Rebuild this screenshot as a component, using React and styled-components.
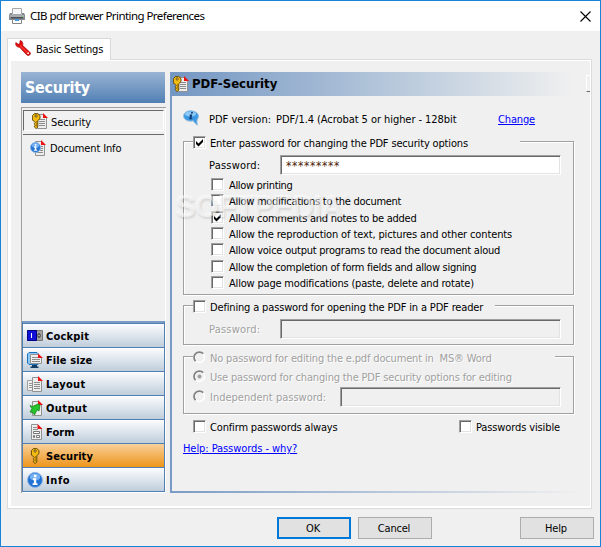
import React from "react";
import styled, { createGlobalStyle, css } from "styled-components";

const GlobalStyle = createGlobalStyle`
  * {
    box-sizing: border-box;
  }

  body {
    margin: 0;
    background: #f0f0f0;
    color: #000;
    font: 11px/15px "DejaVu Sans Condensed", "DejaVu Sans", sans-serif;
  }

  svg {
    display: block;
    flex: none;
  }
`;

const sunken = css`
  border: 1px solid #fff;
  border-top-color: #a0a0a0;
  border-left-color: #a0a0a0;
  box-shadow: inset 1px 1px 0 #696969, inset -1px -1px 0 #e3e3e3;
`;

const Window = styled.div`
  display: flex;
  flex-direction: column;
  width: 601px;
  height: 547px;
  border: 1px solid #1883d7;
  background: #f0f0f0;
  overflow: hidden;
`;

const TitleBar = styled.header`
  display: flex;
  flex: none;
  align-items: center;
  height: 30px;
  padding: 0 9px 0 8px;
  background: #fff;
`;

const Title = styled.h1`
  flex: 1;
  margin: 0 0 0 5px;
  font: 11.5px/16px "Noto Sans", sans-serif;
  letter-spacing: -0.56px;
`;

const Text = styled.span`
  white-space: pre;
  letter-spacing: ${props => props.$track || 0}px;
  ${props =>
    props.$disabled &&
    css`
      color: #a0a0a0;
      text-shadow: 1px 1px 0 #fff;
    `}
`;

const Link = styled.a`
  color: #0000ff;
  text-decoration: underline;
  letter-spacing: ${props => props.$track || 0}px;
  white-space: pre;
`;

const Tab = styled.div`
  display: flex;
  flex: none;
  position: relative;
  z-index: 1;
  width: 104px;
  height: 22px;
  margin: 7px 0 -1px 6px;
  padding: 1px 0 0 7px;
  border: 1px solid #d9d9d9;
  border-bottom: none;
  background: #fff;

  ${Text} {
    margin: 2px 0 0 5px;
  }
`;

const TabPage = styled.main`
  flex: none;
  width: 585px;
  height: 450px;
  margin-left: 6px;
  padding: 1px 1px 2px 3px;
  border: 1px solid #dcdcdc;
  background: #fff;
`;

const Columns = styled.div`
  display: flex;
  height: 100%;
  padding: 11px 0 0 10px;
  background: #f0f0f0;
`;

const Sidebar = styled.aside`
  width: 145px;
  height: 421px;
  display: flex;
  flex-direction: column;
`;

const SidebarTitle = styled.h2`
  width: 144px;
  height: 31px;
  margin: 0 0 4px;
  padding-left: 4px;
  background: linear-gradient(#9ab4d4, #5180b4);
  color: #fff;
  font: bold 16px/32px "DejaVu Sans Condensed", sans-serif;
  letter-spacing: -0.3px;
`;

const SidebarBody = styled.div`
  display: flex;
  flex: 1;
  flex-direction: column;
  border: solid #a0a0a0;
  border-width: 1px 0 0 1px;
  box-shadow: inset -1px -1px 0 #fff;
`;

const SubItem = styled.div`
  display: flex;
  align-items: center;
  height: 21px;
  margin: 2px 2px 0 1px;
  padding-left: 7px;

  ${Text} {
    margin: 2px 0 0 4px;
  }

  ${props =>
    props.$active &&
    css`
      padding-left: 8px;
      border: 1px solid #fff;
      border-top-color: #696969;
      border-left-color: #696969;
      background: #f1f1f1;

      ${Text} {
        margin: 3px 0 0 3px;
      }
    `}
`;

const Divider = styled.div`
  height: 1px;
  margin: 3px 2px 0 1px;
  background: #696969;
`;

const Nav = styled.nav`
  width: 143px;
  margin: auto 0 1px;
  border: 1px solid #5180b4;
  border-top: 2px solid #7a9cc6;
`;

const NavItem = styled.div`
  display: flex;
  align-items: center;
  height: 24px;
  padding-left: 4px;
  border-top: 1px solid #5180b4;
  background: ${props =>
    props.$active
      ? "linear-gradient(#f8d09a, #ee951a)"
      : "linear-gradient(#fcfdfe, #bfcddb)"};
  font-weight: bold;

  ${Text} {
    margin: 1px 0 0 3px;
  }
`;

const Main = styled.section`
  display: flex;
  flex-direction: column;
  width: 412px;
  height: 421px;
  margin-left: 4px;
  background:
    linear-gradient(#7a9bc5, #7a9bc5) left / 2px 100% no-repeat,
    linear-gradient(90deg, #7a9bc5, #f0f0f0) bottom left / 410px 2px no-repeat;
`;

const MainHeader = styled.header`
  display: flex;
  flex: none;
  align-items: center;
  height: 24px;
  padding-left: 3px;
  background: linear-gradient(90deg, #7396c2, #b4c6da 52%, #f0f0f0 98%);
`;

const MainTitle = styled.h2`
  margin: 0 0 0 3px;
  font: bold 13px/20px "DejaVu Sans Condensed", sans-serif;
`;

const ButtonStub = styled.div`
  width: 4px;
  height: 17px;
  margin: 3px 0 0 auto;
  border: solid #fff;
  border-width: 1px 0 1px 1px;
  border-bottom-color: #696969;
`;

const MainBody = styled.div`
  padding: 14px 0 0 13px;
`;

const VersionRow = styled.div`
  display: flex;
  height: 31px;

  ${Text}, ${Link} {
    margin-top: 2px;
  }

  ${Text} {
    margin-left: 10px;
  }

  ${Text} + ${Text} {
    width: 222px;
    margin-left: 5px;
  }
`;

const Group = styled.div`
  width: 391px;
  height: ${props => props.$height}px;
  margin-bottom: ${props => props.$gap}px;
  padding-left: 9px;
  border: 1px solid #a0a0a0;
  box-shadow: 1px 1px 0 #fff, inset 1px 1px 0 #fff;
`;

const Option = styled.div`
  display: flex;
  align-items: flex-start;
  height: ${props => props.$height || 15}px;

  ${Text} {
    margin-left: 4px;
  }
`;

const Legend = styled(Option)`
  width: ${props => props.$width}px;
  margin-top: -6px;
  background: #f0f0f0;
`;

const Input = styled.div`
  ${sunken}
  width: ${props => props.$width}px;
  height: 20px;
  padding: 4px 0 0 5px;
  background: ${props => (props.$disabled ? "#f0f0f0" : "#fff")};
  color: #4a2408;
  font-size: 12px;
  line-height: 13px;
  letter-spacing: 0.6px;
`;

const Field = styled.label`
  display: flex;
  margin: 4px 0 0 16px;

  ${Text} {
    width: 71px;
    margin-top: 3px;
  }
`;

const IndependentOption = styled(Option)`
  ${Text} {
    width: 130px;
  }

  ${Input} {
    margin-top: -3px;
  }
`;

const Permissions = styled.div`
  margin: 3px 0 0 18px;
`;

const Permission = styled(Option)`
  height: 16.33px;

  ${Text} {
    margin-left: 5px;
  }
`;

const Box = styled.span`
  ${sunken}
  flex: none;
  width: 13px;
  height: 13px;
  padding: 1px;
  background: #fff;
`;

const Footnotes = styled.div`
  display: flex;
  justify-content: space-between;
  width: 367px;
  margin: 0 0 6px 10px;
`;

const Buttons = styled.footer`
  display: flex;
  padding: 8px 6px 0 276px;
`;

const Button = styled.button`
  width: 74px;
  height: 22px;
  margin-left: ${props => props.$gap || 0};
  padding: 0 2px 0 0;
  border: ${props => (props.$primary ? "2px solid #0078d7" : "1px solid #adadad")};
  background: #e1e1e1;
  color: #000;
  font: 11px/15px "DejaVu Sans Condensed", sans-serif;
  letter-spacing: -0.2px;
`;

const Watermark = styled.div`
  position: absolute;
  left: 175px;
  top: 189px;
  color: rgba(255, 255, 255, 0.55);
  font: bold 31px/36px "Liberation Sans", sans-serif;
  letter-spacing: -1.2px;
  text-shadow: 1px 2px 2px rgba(0, 0, 0, 0.1);
  pointer-events: none;

  sup {
    margin-left: 1px;
    font-size: 8px;
    line-height: 0;
    vertical-align: 17px;
  }
`;

function Icon({ size = 16, children }) {
  return (
    <svg width={size} height={size} viewBox="0 0 16 16">
      {children}
    </svg>
  );
}

const Sheet = () => (
  <>
    <path d="M5.5 1.5h6l3 3v11h-9z" fill="#ededed" stroke="#929292" />
    <path d="M7 6.5h6M7 8.5h6M7 10.5h6M7 12.5h6" stroke="#8d8d8d" />
    <path d="M11 0v5h5z" fill="#ee1111" />
  </>
);

const Key = ({ x = 0 }) => (
  <g transform={`translate(${x} 0)`} stroke="#584000" strokeWidth=".9">
    <path
      d="M4.4.6h3.4l2.2 2v3l-2.2 2v6.4l-1.6 1.6-1.8-1.6v-.9l1-1-1-1v-.8l1-1-1-.8-2-1.4V2.6z"
      fill="#f4bb12"
    />
    <circle cx="6.1" cy="3" r="1.1" fill="#fff2b0" />
    <path d="M6.5 8v5.6" stroke="#a57700" strokeWidth=".8" />
  </g>
);

const InfoDisc = ({ r = 7.5, cx = 8, cy = 8 }) => (
  <>
    <circle cx={cx} cy={cy} r={r} fill="#2371d2" stroke="#8db6e6" />
    <ellipse cx={cx} cy={cy - r * 0.4} rx={r * 0.7} ry={r * 0.48} fill="#75b1f3" />
    <g transform={`translate(${cx} ${cy}) scale(${r / 7.5})`}>
      <circle cx=".2" cy="-4" r="1.4" fill="#fff" />
      <path d="M-2-1.8h3.2v5H2.5V5H-2.4V3.2h1.3V0H-2z" fill="#fff" />
    </g>
  </>
);

const PrinterIcon = () => (
  <Icon>
    <path d="M3.5.5h9v6h-9z" fill="#f7f7f7" stroke="#a7a7a7" />
    <path d="M1 5h2v2h10V5h2l1 2v5H0V7z" fill="#85898d" />
    <path d="M1 7h14v2H1z" fill="#a8acb0" />
    <path d="M2 9h12v1.5H2z" fill="#4d5155" />
    <path d="M3.5 11.5h9v4h-9z" fill="#fafafa" stroke="#868686" />
    <path d="M6 11h4v2H6z" fill="#3f97e0" />
    <path d="M13 8h1v1h-1z" fill="#66dd55" />
  </Icon>
);

const WrenchIcon = () => (
  <Icon>
    <path
      d="M5.2.5 4.8 3.6 3.3 4.3.8 2.6C.2 5.3 1.6 7.4 4.6 7.2l7 7.6c1.2 1.2 3.4.7 3.8-1 .1-.8-.2-1.4-.8-1.9L7.7 5.6C8.2 2.8 7.4 1 5.2.5z"
      fill="#ec0d0d"
      stroke="#9a0606"
      strokeWidth=".7"
    />
    <circle cx="13.1" cy="13.2" r=".9" fill="#fff" />
    <path d="M5 5.5l7 6.8" stroke="#ff6a5c" strokeWidth=".8" />
  </Icon>
);

const KeySheetIcon = () => (
  <Icon>
    <Sheet />
    <Key x={-2} />
  </Icon>
);

const InfoSheetIcon = () => (
  <Icon>
    <Sheet />
    <InfoDisc cx={5.5} cy={7.5} r={5} />
  </Icon>
);

const BubbleIcon = () => (
  <Icon>
    <path
      d="M7.5.8C3.6.8.6 3 .6 6s3 5.2 6.9 5.2c1 0 1.9-.1 2.7-.4 1 1.6 2.3 3.3 4.3 4.3-.5-1.5-.7-3.5-.3-5.4.9-1 1.3-2.3 1.3-3.7 0-3-3.900-5.200-8-5.200z"
      fill="#3c99e4"
      stroke="#9cc0dd"
    />
    <ellipse cx="7.5" cy="4" rx="5.5" ry="2.6" fill="#8dcbf6" />
    <path d="M8.2 2h1.8l-.4 1.600H7.900zM6.800 4.500h2.500L8.400 8.200h1.100l-.3 1H6.100l.9-3.700h-.5z" fill="#123a72" />
  </Icon>
);

const CockpitIcon = () => (
  <Icon>
    <path d="M.5 2.5h15v10H.5z" fill="#a2a2a2" stroke="#777" />
    <path d="M.5 2.5h9v10h-9z" fill="#1010d8" stroke="#000080" />
    <path d="M4.5 5v5" stroke="#fff" />
    <ellipse cx="12" cy="7.5" rx="1.1" ry="2" fill="#eee" stroke="#222" />
  </Icon>
);

const FileSizeIcon = () => (
  <Icon>
    <path d="M2 .5h8l1 1v11H2L.5 11V2z" fill="#8fc6f2" stroke="#1d72bd" />
    <path d="M3.5 2.5h8l3 3v6h-11z" fill="#ededed" stroke="#929292" />
    <path d="M5 5.5h7M5 7.5h8M5 9.5h8" stroke="#8d8d8d" />
    <path d="M11 1.5v4.5h5z" fill="#ee1111" />
    <path d="M5 13h5v1.5h1.5V16h-8v-1.500H5z" fill="#143d66" />
  </Icon>
);

const LayoutIcon = () => (
  <Icon>
    <path d="M.5 4.5h6v10h-6z" fill="#eee" stroke="#a2a2a2" />
    <path d="M2 7.5h3M2 9.5h3M2 11.5h3" stroke="#999" />
    <Sheet />
  </Icon>
);

const OutputIcon = () => (
  <Icon>
    <path d="M5.5 1.5h6l3 3v11h-9z" fill="#ededed" stroke="#929292" />
    <path d="M11 0v5h5z" fill="#ee1111" />
    <path
      d="M3 5.500l2.500 1L11 4l2 1-1 6-2-1.200L7.500 15 6 12.500 3 12l2-3.200z"
      fill="#27c52c"
      stroke="#138818"
      strokeWidth=".8"
    />
  </Icon>
);

const FormIcon = () => (
  <Icon>
    <path d="M4.5.5h6l4 4v11h-10z" fill="#ededed" stroke="#929292" />
    <path d="M6 3.5h4M6 5.5h5" stroke="#8d8d8d" />
    <path d="M6.5 7.5h6v2h-6zM6.5 11.5h1v2h-1zM9.5 11.5h3v2h-3z" fill="#fff" stroke="#777" />
    <path d="M10.5 0v5h5z" fill="#ee1111" />
  </Icon>
);

const KeyIcon = () => (
  <Icon>
    <Key x={2} />
  </Icon>
);

const InfoIcon = () => (
  <Icon>
    <InfoDisc />
  </Icon>
);

const CloseIcon = () => (
  <svg width="11" height="11" viewBox="0 0 11 11">
    <path d="M.5.5l10 10M10.5.5l-10 10" stroke="#000" strokeWidth="1.1" />
  </svg>
);

function Checkbox({ checked }) {
  return (
    <Box>
      {checked && (
        <svg width="9" height="9" viewBox="0 0 9 9">
          <path d="M1 3v3l2.5 2.5L8 4V1L3.5 5.5z" fill="#000" />
        </svg>
      )}
    </Box>
  );
}

function Radio({ checked }) {
  return (
    <svg width="13" height="13" viewBox="0 0 13 13">
      <circle cx="6.5" cy="6.5" r="5" fill="#f0f0f0" stroke="#fff" strokeWidth="1.5" />
      <path d="M2.6 10.2A5.3 5.3 0 0 1 10.2 2.6" fill="none" stroke="#808080" strokeWidth="1.7" />
      {checked && <circle cx="6.5" cy="6.5" r="2" fill="#a0a0a0" />}
    </svg>
  );
}

const sections = [
  { name: "Cockpit", icon: <CockpitIcon />, track: 0.2 },
  { name: "File size", icon: <FileSizeIcon /> },
  { name: "Layout", icon: <LayoutIcon />, track: 0.3 },
  { name: "Output", icon: <OutputIcon />, track: 0.4 },
  { name: "Form", icon: <FormIcon /> },
  { name: "Security", icon: <KeyIcon />, active: true },
  { name: "Info", icon: <InfoIcon />, track: 0.6 }
];

const permissions = [
  { label: "Allow printing", track: -0.33 },
  { label: "Allow modifications to the document", track: -0.27 },
  { label: "Allow comments and notes to be added", track: -0.26, checked: true },
  { label: "Allow the reproduction of text, pictures and other contents", track: -0.13 },
  { label: "Allow voice output programs to read the document aloud", track: -0.23 },
  { label: "Allow the completion of form fields and allow signing", track: -0.28 },
  { label: "Allow page modifications (paste, delete and rotate)", track: -0.19 }
];

function SecuritySidebar() {
  return (
    <Sidebar>
      <SidebarTitle>Security</SidebarTitle>
      <SidebarBody>
        <SubItem $active>
          <KeySheetIcon />
          <Text $track={-0.08}>Security</Text>
        </SubItem>
        <Divider />
        <SubItem>
          <InfoSheetIcon />
          <Text $track={-0.14}>Document Info</Text>
        </SubItem>
        <Nav>
          {sections.map(s => (
            <NavItem key={s.name} $active={s.active}>
              {s.icon}
              <Text $track={s.track || 0.1}>{s.name}</Text>
            </NavItem>
          ))}
        </Nav>
      </SidebarBody>
    </Sidebar>
  );
}

function SecurityPage() {
  return (
    <Main>
      <MainHeader>
        <KeySheetIcon />
        <MainTitle>PDF-Security</MainTitle>
      </MainHeader>
      <MainBody>
        <VersionRow>
          <BubbleIcon />
          <Text>PDF version:</Text>
          <Text $track={-0.06}>PDF/1.4 (Acrobat 5 or higher - 128bit</Text>
          <Link $track={-0.15}>Change</Link>
        </VersionRow>

        <Group $height={154} $gap={10}>
          <Legend $width={327}>
            <Checkbox checked />
            <Text $track={-0.16}>Enter password for changing the PDF security options</Text>
          </Legend>
          <Field>
            <Text $track={0.2}>Password:</Text>
            <Input $width={281}>*********</Input>
          </Field>
          <Permissions>
            {permissions.map(p => (
              <Permission key={p.label}>
                <Checkbox checked={p.checked} />
                <Text $track={p.track}>{p.label}</Text>
              </Permission>
            ))}
          </Permissions>
        </Group>

        <Group $height={40} $gap={11}>
          <Legend $width={302}>
            <Checkbox />
            <Text $track={-0.16}>Defining a password for opening the PDF in a PDF reader</Text>
          </Legend>
          <Field>
            <Text $disabled $track={0.2}>Password:</Text>
            <Input $width={281} $disabled />
          </Field>
        </Group>

        <Group $height={58} $gap={6}>
          <Legend $width={362} $height={19}>
            <Radio />
            <Text $disabled $track={-0.16}>{"No password for editing the e.pdf document in  MS® Word"}</Text>
          </Legend>
          <Option $height={20}>
            <Radio checked />
            <Text $disabled $track={-0.17}>Use password for changing the PDF security options for editing</Text>
          </Option>
          <IndependentOption>
            <Radio />
            <Text $disabled>Independent password:</Text>
            <Input $width={221} $disabled />
          </IndependentOption>
        </Group>

        <Footnotes>
          <Option>
            <Checkbox />
            <Text $track={-0.16}>Confirm passwords always</Text>
          </Option>
          <Option>
            <Checkbox />
            <Text $track={-0.12}>Passwords visible</Text>
          </Option>
        </Footnotes>
        <Link $track={-0.07}>Help: Passwords - why?</Link>
      </MainBody>
    </Main>
  );
}

function App() {
  return (
    <>
      <GlobalStyle />
      <Window>
        <TitleBar>
          <PrinterIcon />
          <Title>CIB pdf brewer Printing Preferences</Title>
          <CloseIcon />
        </TitleBar>
        <Tab>
          <WrenchIcon />
          <Text $track={-0.2}>Basic Settings</Text>
        </Tab>
        <TabPage>
          <Columns>
            <SecuritySidebar />
            <SecurityPage />
            <ButtonStub />
          </Columns>
        </TabPage>
        <Buttons>
          <Button $primary>OK</Button>
          <Button $gap="7px">Cancel</Button>
          <Button $gap="auto">Help</Button>
        </Buttons>
      </Window>
      <Watermark>
        SOFTPEDIA<sup>®</sup>
      </Watermark>
    </>
  );
}

export default App;
